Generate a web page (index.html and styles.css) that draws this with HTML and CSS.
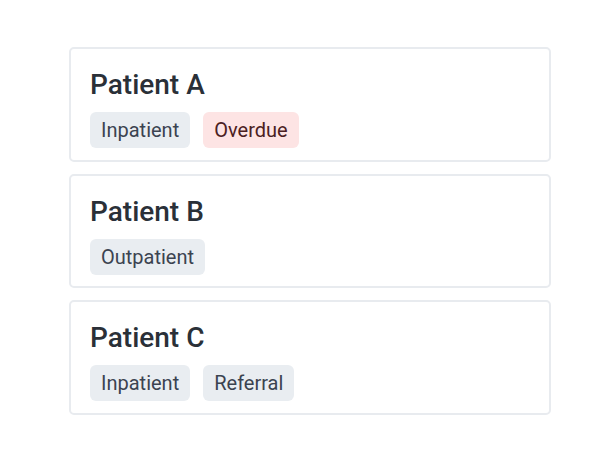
FILE: index.html
```html
<!DOCTYPE html>
<html>
<head>
<meta charset="utf-8">
<link rel="stylesheet" href="styles.css">
</head>
<body>
<div class="list">
  <div class="card">
    <div class="title">Patient A</div>
    <div class="tags"><span class="tag">Inpatient</span><span class="tag warn">Overdue</span></div>
  </div>
  <div class="card">
    <div class="title">Patient B</div>
    <div class="tags"><span class="tag">Outpatient</span></div>
  </div>
  <div class="card">
    <div class="title">Patient C</div>
    <div class="tags"><span class="tag">Inpatient</span><span class="tag">Referral</span></div>
  </div>
</div>
</body>
</html>
```
FILE: styles.css
```css
html, body { margin: 0; padding: 0; background: #fff; }
body { font-family: Roboto, "Noto Sans", sans-serif; }
.list {
  display: flex;
  flex-direction: column;
  gap: 12px;
  width: 482px;
  margin: 47px 0 0 69px;
}
.card {
  box-sizing: border-box;
  height: 114.5px;
  border: 2px solid #e8ebef;
  border-radius: 5px;
  padding: 19px 19px 0;
}
.title {
  font-size: 28px;
  font-weight: 500;
  color: #2a3038;
  line-height: 33px;
}
.tags {
  display: flex;
  gap: 13px;
  margin-top: 11px;
}
.tag {
  background: #e9edf1;
  color: #3b4350;
  font-size: 20px;
  line-height: 36px;
  padding: 0 11px;
  border-radius: 6px;
}
.tag.warn { background: #fde4e4; color: #4b2022; }
```
